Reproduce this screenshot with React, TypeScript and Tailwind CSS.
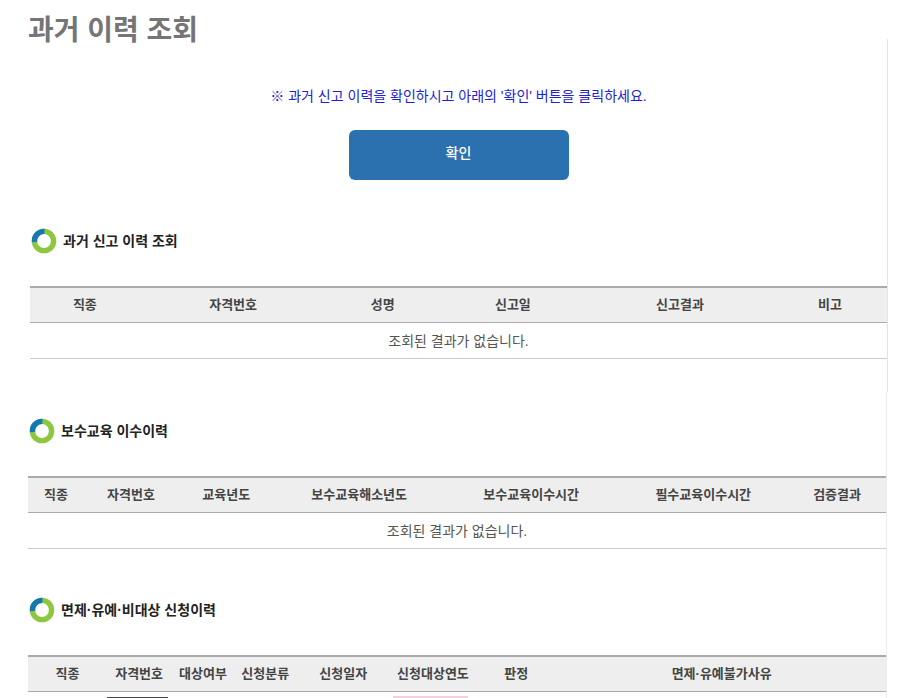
import clsx from "clsx";

interface Column {
  label: string;
  width: string;
}

const REPORT_COLUMNS: Column[] = [
  { label: "직종", width: "w-[12.8%]" },
  { label: "자격번호", width: "w-[21.8%]" },
  { label: "성명", width: "w-[13.1%]" },
  { label: "신고일", width: "w-[17.3%]" },
  { label: "신고결과", width: "w-[21.7%]" },
  { label: "비고", width: "w-[13.3%]" },
];

const EDUCATION_COLUMNS: Column[] = [
  { label: "직종", width: "w-[6.5%]" },
  { label: "자격번호", width: "w-[11%]" },
  { label: "교육년도", width: "w-[11.2%]" },
  { label: "보수교육해소년도", width: "w-[19.8%]" },
  { label: "보수교육이수시간", width: "w-[20.3%]" },
  { label: "필수교육이수시간", width: "w-[19.8%]" },
  { label: "검증결과", width: "w-[11.4%]" },
];

const EXEMPTION_COLUMNS: Column[] = [
  { label: "직종", width: "w-[9.2%]" },
  { label: "자격번호", width: "w-[7.5%]" },
  { label: "대상여부", width: "w-[7.4%]" },
  { label: "신청분류", width: "w-[7.1%]" },
  { label: "신청일자", width: "w-[11.1%]" },
  { label: "신청대상연도", width: "w-[9.8%]" },
  { label: "판정", width: "w-[9.6%]" },
  { label: "면제·유예불가사유", width: "w-[38.3%]" },
];

/** Green ring with a blue upper-left quarter */
function RingIcon() {
  return (
    <svg className="size-[26px] shrink-0" viewBox="0 0 26 26" fill="none" strokeWidth="5.4" aria-hidden="true">
      <circle cx="13" cy="13" r="9.6" stroke="#8dc63f" />
      <path d="M3.5 14A9.6 9.6 0 0 1 13.4 3.4" stroke="#1478b4" />
    </svg>
  );
}

function SectionTitle({ id, children }: { id: string; children: string }) {
  return (
    <div className="flex items-center gap-1.5 px-px">
      <RingIcon />
      <h2 id={id} className="text-sm font-bold text-[#222]">
        {children}
      </h2>
    </div>
  );
}

interface HistoryTableProps {
  labelledBy: string;
  columns: Column[];
  children?: React.ReactNode;
}

function HistoryTable({ labelledBy, columns, children }: HistoryTableProps) {
  return (
    <table className="mt-8 w-full table-fixed border-separate border-spacing-0" aria-labelledby={labelledBy}>
      <thead>
        <tr>
          {columns.map(({ label, width }) => (
            <th
              key={label}
              scope="col"
              className={clsx(width, "h-[37px] whitespace-nowrap border-b border-t-2 border-[#aaa] bg-[#eee] p-0 text-[13px] leading-5 font-bold text-[#444]")}
            >
              {label}
            </th>
          ))}
        </tr>
      </thead>
      <tbody>
        {children ?? (
          <tr>
            <td colSpan={columns.length} className="h-9 border-b border-[#ccc] p-0 text-center text-sm text-[#555]">
              조회된 결과가 없습니다.
            </td>
          </tr>
        )}
      </tbody>
    </table>
  );
}

export default function App() {
  return (
    <div className="bg-white pr-3.5 font-['Liberation_Sans','Noto_Sans_CJK_KR',sans-serif]">
      <header className="pt-[23px] pl-7">
        <h1 className="text-[28px] leading-4 font-bold text-[#757575]">과거 이력 조회</h1>
      </header>

      <main>
        <div className="ml-[30px] border-r border-[#e4e4e4] pt-[47px] pb-[33px]">
          <p className="text-center text-sm text-[#1c22d2]">※ 과거 신고 이력을 확인하시고 아래의 '확인' 버튼을 클릭하세요.</p>
          <div className="mt-6 flex justify-center">
            <button type="button" className="h-[50px] w-[220px] rounded-md bg-[#2b71b0] pb-1 text-sm font-medium text-white">
              확인
            </button>
          </div>

          <section className="mt-12">
            <SectionTitle id="report-history">과거 신고 이력 조회</SectionTitle>
            <HistoryTable labelledBy="report-history" columns={REPORT_COLUMNS} />
          </section>
        </div>

        <div className="mr-px ml-7 border-r border-[#ececec] pt-[26px]">
          <section>
            <SectionTitle id="education-history">보수교육 이수이력</SectionTitle>
            <HistoryTable labelledBy="education-history" columns={EDUCATION_COLUMNS} />
          </section>

          <section className="mt-12">
            <SectionTitle id="exemption-history">면제·유예·비대상 신청이력</SectionTitle>
            <HistoryTable labelledBy="exemption-history" columns={EXEMPTION_COLUMNS}>
              <tr>
                <td className="p-0" />
                <td className="p-0 pt-1 align-bottom">
                  <div className="h-px w-[61px] bg-[#444]" />
                </td>
                <td colSpan={3} className="p-0" />
                <td className="p-0 pt-1 align-bottom">
                  <div className="ml-0.5 h-0.5 w-[75px] bg-[#f5cfe0]" />
                </td>
                <td colSpan={2} className="p-0" />
              </tr>
            </HistoryTable>
          </section>
        </div>
      </main>
    </div>
  );
}
